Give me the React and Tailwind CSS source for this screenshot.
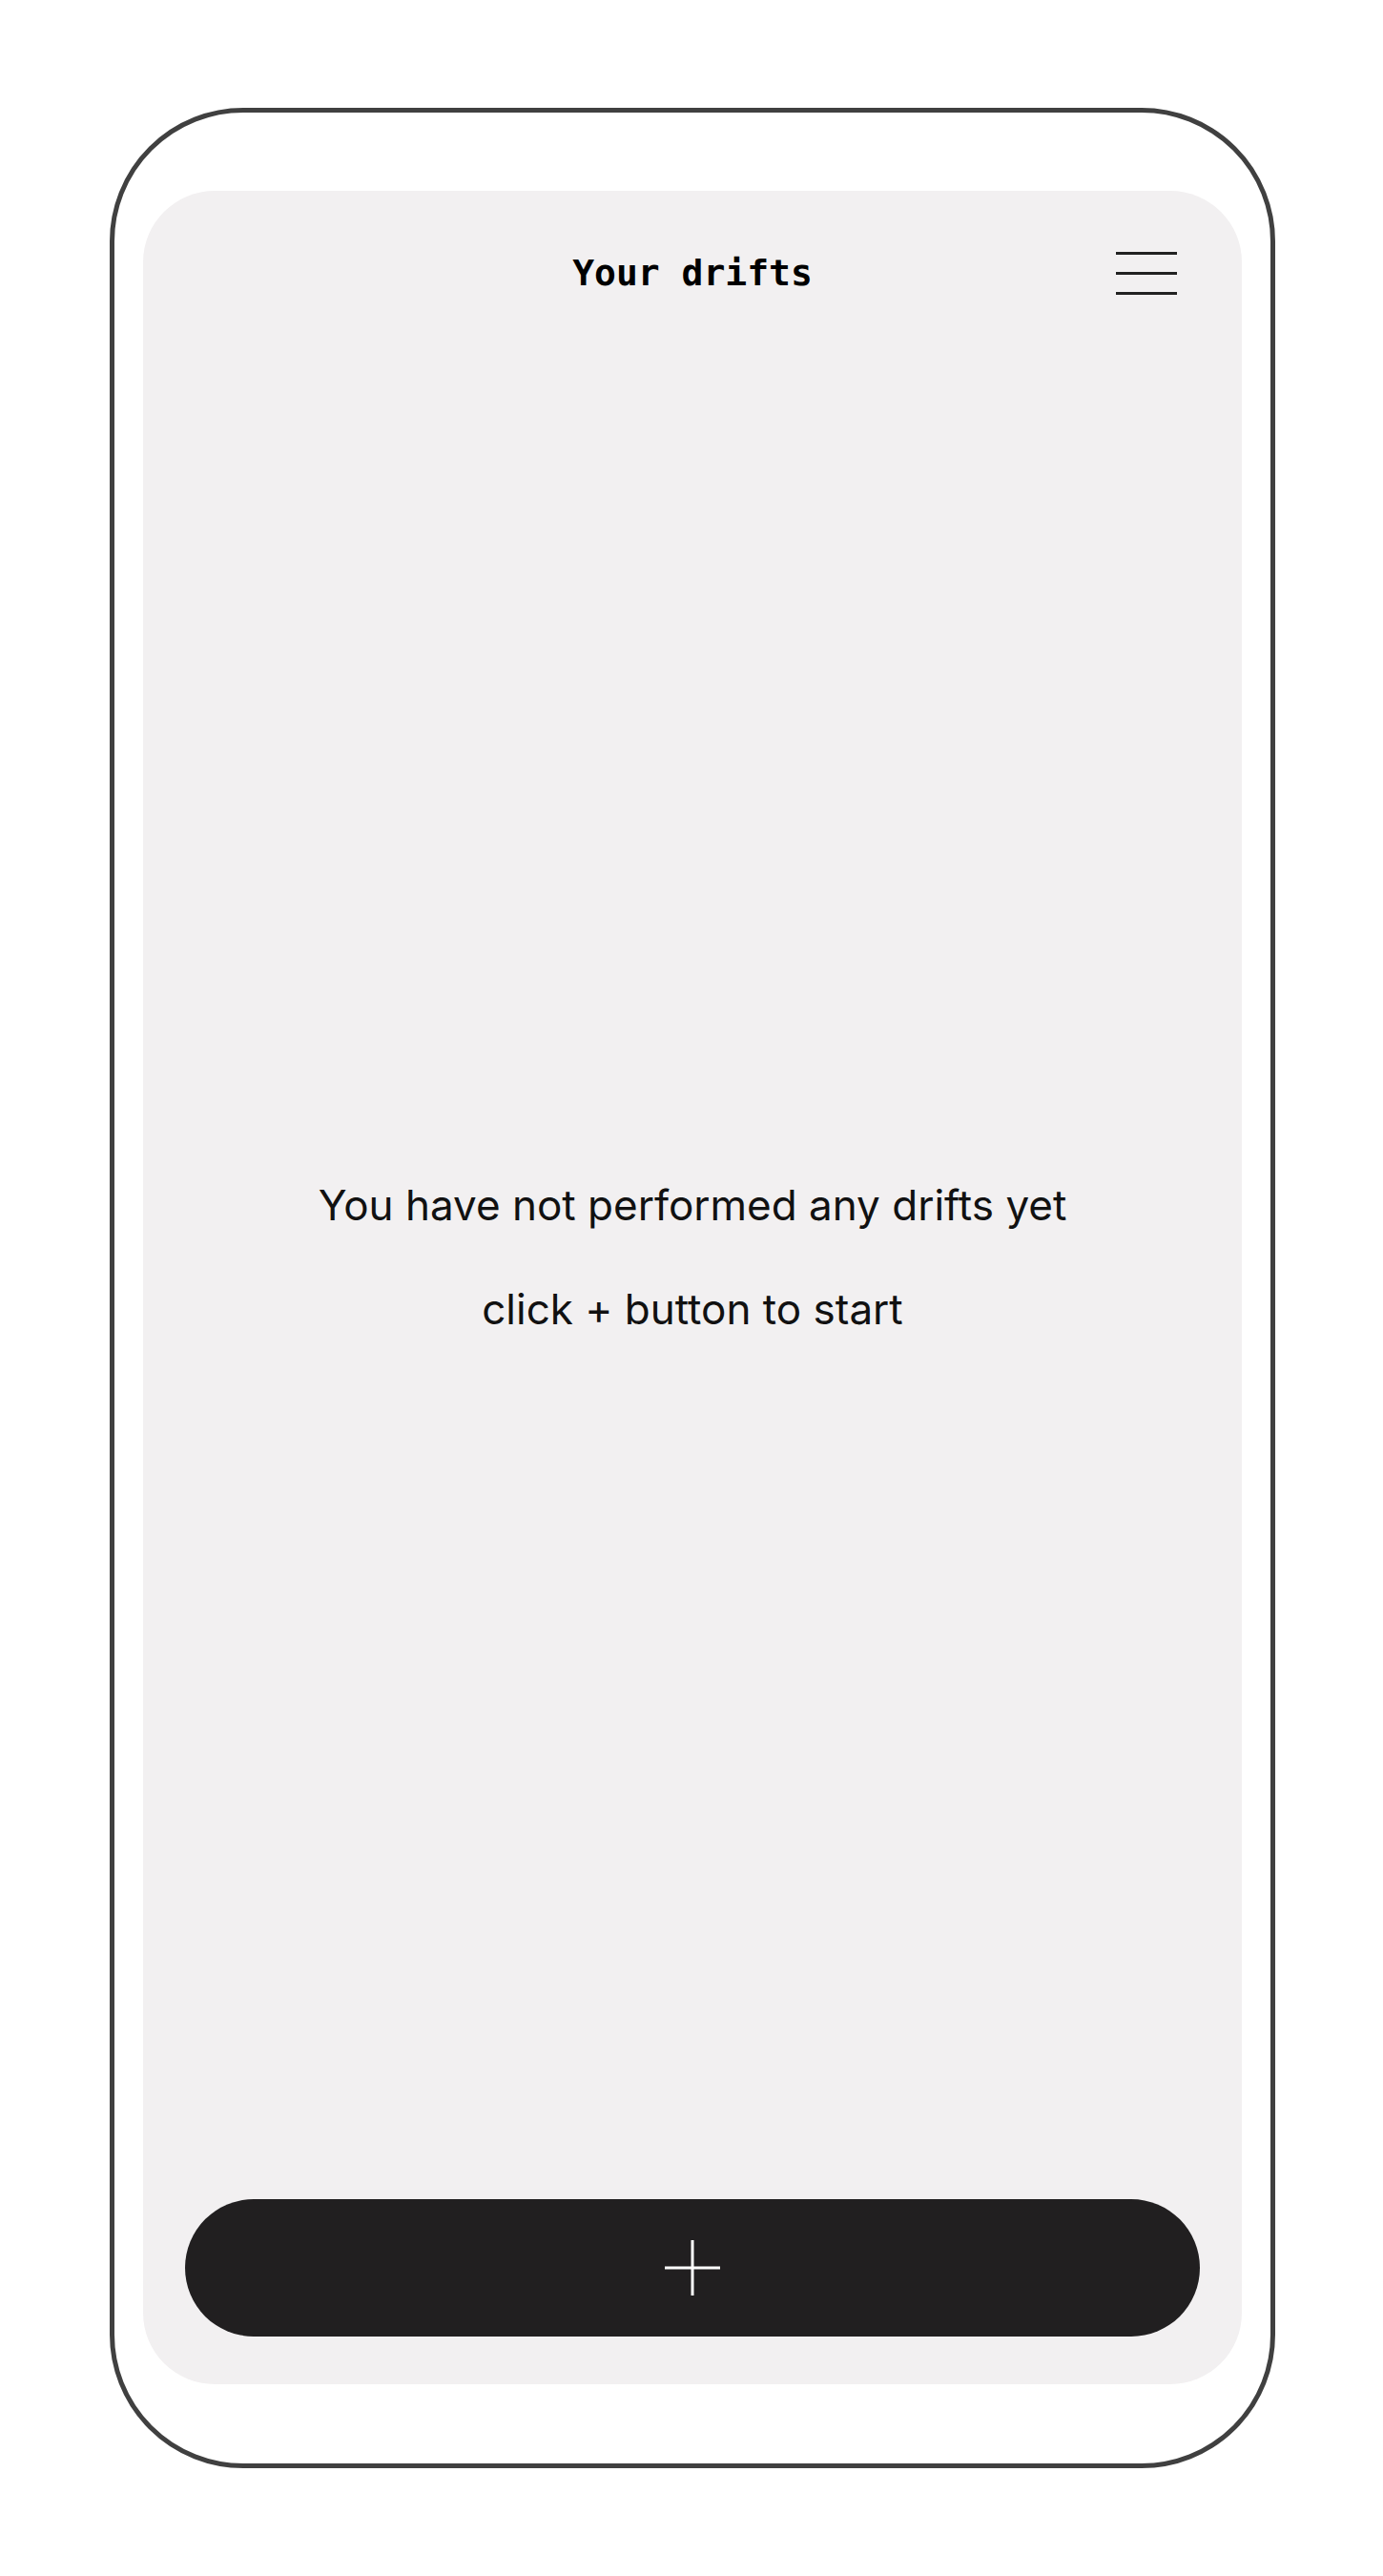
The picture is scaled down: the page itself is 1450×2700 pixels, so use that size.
export default function App() {
  return (
    <div className="w-[1450px] h-[2700px] bg-white pt-[113px] pl-[115px]">
      {/* phone frame */}
      <div className="w-[1222px] h-[2474px] border-[5px] border-[#404040] rounded-[140px] px-[30px] pt-[82px] pb-[83px]">
        {/* screen */}
        <div className="h-full bg-[#f2f0f1] rounded-[75px] flex flex-col">
          {/* header */}
          <div className="grid grid-cols-[1fr_auto_1fr] items-center pt-[64px]">
            <div />
            <h1 className="font-['DejaVu_Sans_Mono',monospace] font-bold text-[38px] leading-[44px] text-black">
              Your drifts
            </h1>
            <div className="justify-self-end pr-[68px]">
              <button className="flex flex-col gap-[18.5px] w-[64px]">
                <span className="block h-[2.5px] bg-[#222]" />
                <span className="block h-[2.5px] bg-[#222]" />
                <span className="block h-[2.5px] bg-[#222]" />
              </button>
            </div>
          </div>

          {/* empty state */}
          <div className="flex-1 flex flex-col items-center justify-center gap-[55px] pt-[22px] font-['Inter',sans-serif] text-[44px] leading-[54px] text-[#111]">
            <p>You have not performed any drifts yet</p>
            <p>click + button to start</p>
          </div>

          {/* add button */}
          <button className="mx-[44px] mb-[50px] h-[144px] rounded-full bg-[#211f20] flex items-center justify-center">
            <svg width="58" height="58" viewBox="0 0 58 58">
              <line x1="0" y1="29" x2="58" y2="29" stroke="white" strokeWidth="3" />
              <line x1="29" y1="0" x2="29" y2="58" stroke="white" strokeWidth="3" />
            </svg>
          </button>
        </div>
      </div>
    </div>
  );
}
